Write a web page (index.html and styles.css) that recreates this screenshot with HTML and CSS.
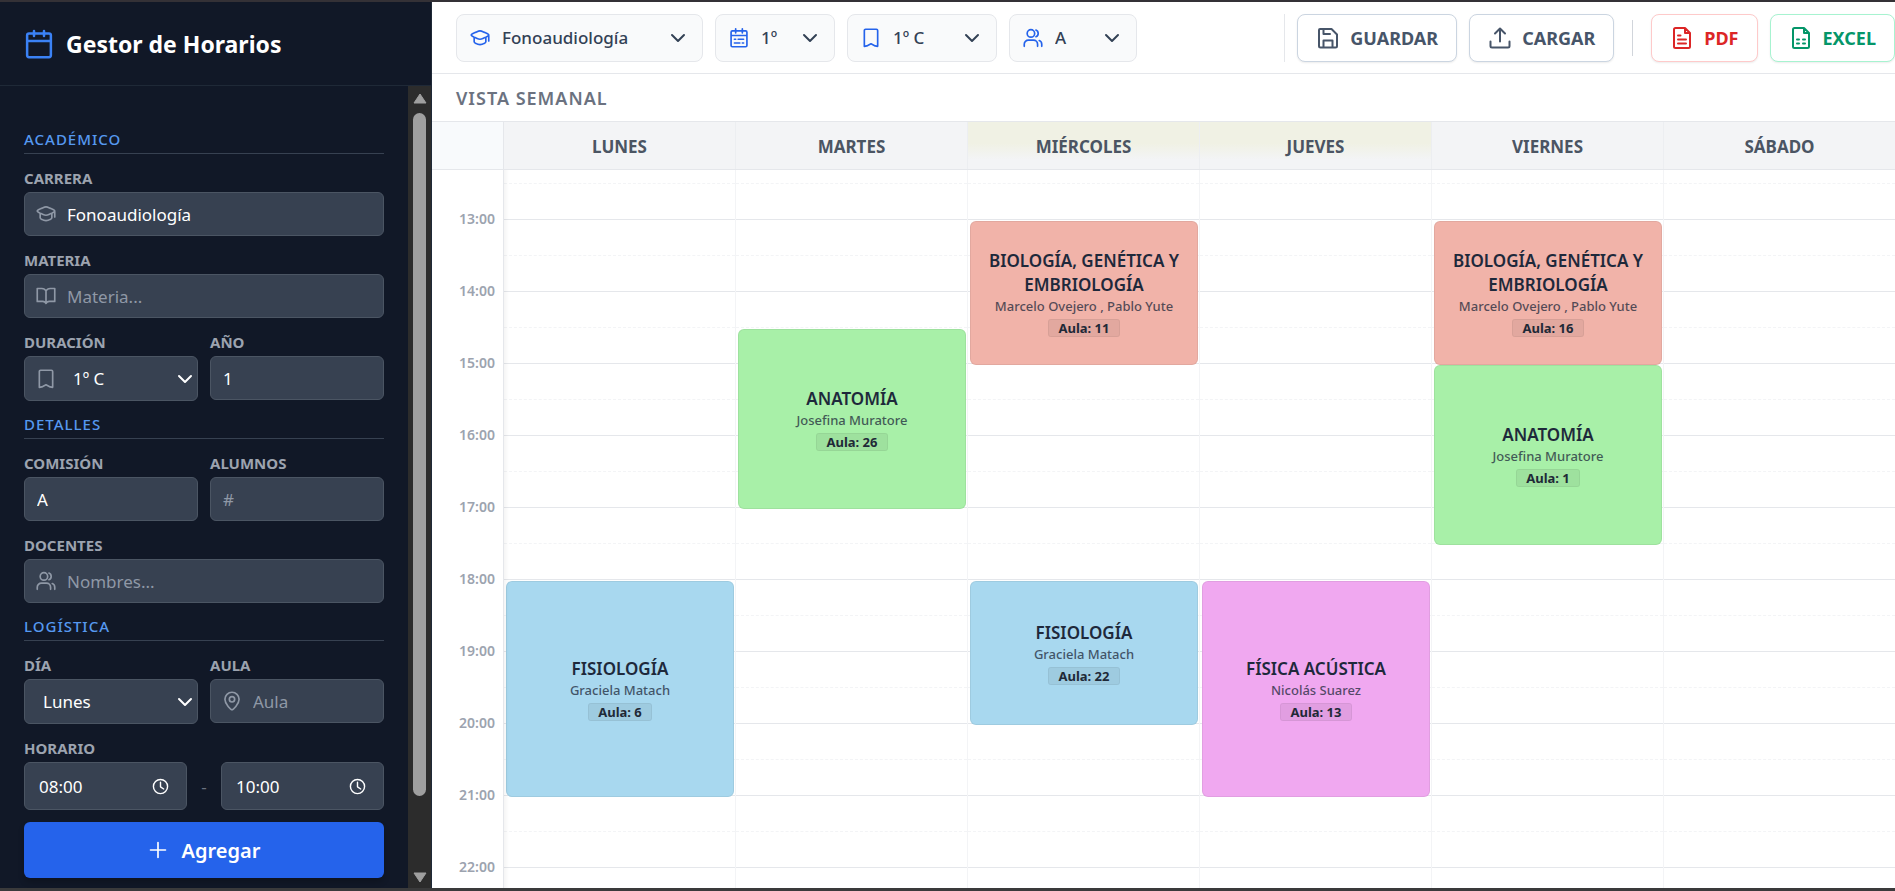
FILE: index.html
```html
<!DOCTYPE html>
<html lang="es">
<head>
    <meta charset="UTF-8">
    <meta name="viewport" content="width=device-width, initial-scale=1.0">
    <title>Gestor de Horarios</title>
    <link rel="stylesheet" href="styles.css">
</head>
<body>
    <svg class="sprite" aria-hidden="true">
        <symbol id="i-calendar" viewBox="0 0 24 24"><path d="M4 3.500h16a1.500 1.500 0 0 1 1.500 1.500v16a1.500 1.500 0 0 1-1.500 1.500H4A1.500 1.500 0 0 1 2.500 21V5A1.500 1.500 0 0 1 4 3.500zM2.500 9.500h19M8 1.500v4M16 1.500v4"/></symbol>
        <symbol id="i-calendar-days" viewBox="0 0 24 24"><path d="M4 3.500h16A1.500 1.500 0 0 1 21.500 5v16a1.500 1.500 0 0 1-1.500 1.500H4A1.500 1.500 0 0 1 2.500 21V5A1.500 1.500 0 0 1 4 3.500zM2.500 9h19M8 1v5M16 1v5M6.500 13.500H8M11 13.500h6.500M6.500 18H13M16 18h1.500"/></symbol>
        <symbol id="i-cap" viewBox="0 0 24 24"><path d="M12 3.500c2 0 3.500 1 6 2s4.500 1.700 4.500 3-2 2-4.500 3-4 2-6 2-3.500-1-6-2-4.500-1.700-4.500-3 2-2 4.500-3 4-2 6-2zM5 11.500v5c0 1 1 1.500 2 2 1.500 1 3 1.500 5 1.500s3.500-.5 5-1.500c1-.5 2-1 2-2v-5M22.500 9v6.500"/></symbol>
        <symbol id="i-book" viewBox="0 0 24 24"><path d="M12 6v15M12 6c-1-2-3-3-5-3H1.500v15.500H8c2 0 3.500 1 4 2.500.5-1.500 2-2.500 4-2.500h6.500V3H17c-2 0-4 1-5 3z"/></symbol>
        <symbol id="i-bookmark" viewBox="0 0 24 24"><path d="M5.500 1.500h13A1.500 1.500 0 0 1 20 3v19l-3-.5-5-2.500-5 2.500-3 .5V3a1.500 1.500 0 0 1 1.500-1.500z"/></symbol>
        <symbol id="i-users" viewBox="0 0 24 24"><circle cx="9.500" cy="6.500" r="4.500"/><path d="M1.500 22v-2.500a5 5 0 0 1 5-5h6a5 5 0 0 1 5 5V22M15.500 2.500a4.300 4.300 0 0 1 0 8M19.500 15c2 .7 3 2.300 3 4.500V22"/></symbol>
        <symbol id="i-pin" viewBox="0 0 24 24"><path d="M12 22.500c-1 0-8.500-6.500-8.500-12.500a8.500 8.500 0 0 1 17 0c0 6-7.500 12.500-8.500 12.500z"/><circle cx="12" cy="10" r="3.200"/></symbol>
        <symbol id="i-save" viewBox="0 0 24 24"><path d="M4 3h11.500L21 8.500V20a1.500 1.500 0 0 1-1.500 1.500h-15A1.500 1.500 0 0 1 3 20V4a1 1 0 0 1 1-1zM7.500 3v5H14M7.500 21.500V14.500h9v7"/></symbol>
        <symbol id="i-upload" viewBox="0 0 24 24"><path d="M2.500 15.500v4.500A1.500 1.500 0 0 0 4 21.500h16a1.500 1.500 0 0 0 1.500-1.500v-4.500M12 15.500V3M7 7.500L12 2.500l5 5"/></symbol>
        <symbol id="i-pdf" viewBox="0 0 24 24"><path d="M15 2H5.500A1.500 1.500 0 0 0 4 3.500v17A1.500 1.500 0 0 0 5.500 22h13a1.500 1.500 0 0 0 1.500-1.500V7zM15 2v5h5M8 9.500h2.500M8 13.500h8M8 17.500h8"/></symbol>
        <symbol id="i-excel" viewBox="0 0 24 24"><path d="M15 2H5.500A1.500 1.500 0 0 0 4 3.500v17A1.500 1.500 0 0 0 5.500 22h13a1.500 1.500 0 0 0 1.500-1.500V7zM15 2v5h5M8 13.500h2M14 13.500h2M8 17.500h2M14 17.500h2"/></symbol>
        <symbol id="i-clock" viewBox="0 0 24 24"><circle cx="12" cy="12" r="10"/><path d="M12 6v6.500l4.500 3"/></symbol>
        <symbol id="i-plus" viewBox="0 0 24 24"><path d="M12 3v18M3 12h18"/></symbol>
        <symbol id="i-chevron" viewBox="0 0 16 16"><path d="M2 5l6 6 6-6"/></symbol>
    </svg>

    <aside class="sidebar">
        <div class="sidebar-header">
            <svg class="icon logo"><use href="#i-calendar"/></svg>
            <h1>Gestor de Horarios</h1>
        </div>
        <div class="sidebar-body">
            <form class="form" onsubmit="return false">
                <h2 class="section-title">ACADÉMICO</h2>
                <div class="field">
                    <label for="carrera">CARRERA</label>
                    <div class="control with-icon">
                        <svg class="icon"><use href="#i-cap"/></svg>
                        <input type="text" id="carrera" value="Fonoaudiología">
                    </div>
                </div>
                <div class="field">
                    <label for="materia">MATERIA</label>
                    <div class="control with-icon">
                        <svg class="icon"><use href="#i-book"/></svg>
                        <input type="text" id="materia" placeholder="Materia...">
                    </div>
                </div>
                <div class="row">
                    <div class="field">
                        <label for="duracion">DURACIÓN</label>
                        <div class="control with-icon">
                            <svg class="icon"><use href="#i-bookmark"/></svg>
                            <select id="duracion"><option>1º C</option><option>2º C</option></select>
                            <svg class="chevron"><use href="#i-chevron"/></svg>
                        </div>
                    </div>
                    <div class="field">
                        <label for="anio">AÑO</label>
                        <div class="control"><input type="text" id="anio" value="1"></div>
                    </div>
                </div>

                <h2 class="section-title">DETALLES</h2>
                <div class="row">
                    <div class="field">
                        <label for="comision">COMISIÓN</label>
                        <div class="control"><input type="text" id="comision" value="A"></div>
                    </div>
                    <div class="field">
                        <label for="alumnos">ALUMNOS</label>
                        <div class="control"><input type="text" id="alumnos" placeholder="#"></div>
                    </div>
                </div>
                <div class="field">
                    <label for="docentes">DOCENTES</label>
                    <div class="control with-icon">
                        <svg class="icon"><use href="#i-users"/></svg>
                        <input type="text" id="docentes" placeholder="Nombres...">
                    </div>
                </div>

                <h2 class="section-title">LOGÍSTICA</h2>
                <div class="row">
                    <div class="field">
                        <label for="dia">DÍA</label>
                        <div class="control">
                            <select id="dia"><option>Lunes</option><option>Martes</option></select>
                            <svg class="chevron"><use href="#i-chevron"/></svg>
                        </div>
                    </div>
                    <div class="field">
                        <label for="aula">AULA</label>
                        <div class="control with-icon">
                            <svg class="icon"><use href="#i-pin"/></svg>
                            <input type="text" id="aula" placeholder="Aula">
                        </div>
                    </div>
                </div>
                <div class="field">
                    <label for="inicio">HORARIO</label>
                    <div class="time-row">
                        <div class="control time">
                            <input type="text" id="inicio" value="08:00">
                            <svg class="clock"><use href="#i-clock"/></svg>
                        </div>
                        <span class="dash">-</span>
                        <div class="control time">
                            <input type="text" id="fin" value="10:00" aria-label="Fin">
                            <svg class="clock"><use href="#i-clock"/></svg>
                        </div>
                    </div>
                </div>
                <button type="submit" class="btn-add"><svg class="icon"><use href="#i-plus"/></svg>Agregar</button>
            </form>
            <div class="scrollbar" aria-hidden="true">
                <svg class="arrow" viewBox="0 0 14 11"><path d="M7 1L13 10H1z"/></svg>
                <div class="track"><div class="thumb"></div></div>
                <svg class="arrow" viewBox="0 0 14 11"><path d="M7 10L1 1h12z"/></svg>
            </div>
        </div>
    </aside>

    <main class="main">
        <div class="toolbar">
            <div class="filters">
                <label class="filter filter-carrera">
                    <svg class="icon"><use href="#i-cap"/></svg>
                    <select aria-label="Carrera"><option>Fonoaudiología</option></select>
                    <svg class="chevron"><use href="#i-chevron"/></svg>
                </label>
                <label class="filter filter-anio">
                    <svg class="icon"><use href="#i-calendar-days"/></svg>
                    <select aria-label="Año"><option>1º</option></select>
                    <svg class="chevron"><use href="#i-chevron"/></svg>
                </label>
                <label class="filter filter-duracion">
                    <svg class="icon"><use href="#i-bookmark"/></svg>
                    <select aria-label="Duración"><option>1º C</option></select>
                    <svg class="chevron"><use href="#i-chevron"/></svg>
                </label>
                <label class="filter filter-comision">
                    <svg class="icon"><use href="#i-users"/></svg>
                    <select aria-label="Comisión"><option>A</option></select>
                    <svg class="chevron"><use href="#i-chevron"/></svg>
                </label>
            </div>
            <div class="actions">
                <button class="btn"><svg class="icon"><use href="#i-save"/></svg>GUARDAR</button>
                <button class="btn"><svg class="icon"><use href="#i-upload"/></svg>CARGAR</button>
                <span class="divider"></span>
                <button class="btn btn-pdf"><svg class="icon"><use href="#i-pdf"/></svg>PDF</button>
                <button class="btn btn-excel"><svg class="icon"><use href="#i-excel"/></svg>EXCEL</button>
            </div>
        </div>
        <h2 class="view-title">VISTA SEMANAL</h2>
        <div class="days-header">
            <div class="corner"></div>
            <div class="day-name">LUNES</div>
            <div class="day-name">MARTES</div>
            <div class="day-name glow">MIÉRCOLES</div>
            <div class="day-name glow">JUEVES</div>
            <div class="day-name">VIERNES</div>
            <div class="day-name">SÁBADO</div>
        </div>
        <div class="schedule" id="schedule">
            <div class="hours" id="hours"></div>
        </div>
    </main>

    <script src="script.js"></script>
</body>
</html>
```

FILE: styles.css
```css
* {
    box-sizing: border-box;
}
body {
    margin: 0;
    height: 100vh;
    display: flex;
    font-family: "Noto Sans", "Open Sans", sans-serif;
    font-size: 17px;
    background-color: white;
    border-top: 2px solid #343136;
    border-bottom: 3px solid #3a3a3b;
    overflow: hidden;
}
h1, h2 {
    margin: 0;
}
input, select, button {
    font-family: inherit;
    font-size: 17px;
}
select {
    appearance: none;
}
.sprite {
    position: absolute;
    width: 0;
    height: 0;
}
.icon, .chevron, .clock {
    fill: none;
    stroke: currentColor;
    stroke-linecap: round;
    stroke-linejoin: round;
    flex: none;
}
.icon {
    width: 20px;
    height: 20px;
    stroke-width: 2;
}
.chevron {
    width: 16px;
    height: 16px;
    stroke-width: 2;
}

/* Sidebar */
.sidebar {
    width: 432px;
    flex: none;
    display: flex;
    flex-direction: column;
    background-color: #111827;
    border-right: 1px solid #1f2937;
    color: white;
}
.sidebar-header {
    display: flex;
    align-items: center;
    gap: 12px;
    height: 84px;
    flex: none;
    padding: 0 24px;
    border-bottom: 1px solid #1f2937;
}
.sidebar-header h1 {
    font-size: 23px;
    line-height: 32px;
    font-weight: 700;
}
.logo {
    width: 30px;
    height: 30px;
    color: #3b82f6;
}
.sidebar-body {
    display: flex;
    flex: 1;
    min-height: 0;
}
.form {
    flex: 1;
    min-width: 0;
    display: flex;
    flex-direction: column;
    gap: 12px;
    padding: 42px 24px 10px;
}
.section-title {
    font-size: 15px;
    line-height: 23px;
    font-weight: 500;
    letter-spacing: 1px;
    color: #5699f0;
    padding-bottom: 2px;
    border-bottom: 1px solid #374151;
}
.row {
    display: grid;
    grid-template-columns: 1fr 1fr;
    align-items: start;
    gap: 12px;
}
.field {
    display: flex;
    flex-direction: column;
    gap: 2px;
}
.field label {
    font-size: 15px;
    line-height: 24px;
    font-weight: 700;
    color: #9ca3af;
}
.control {
    display: flex;
    align-items: center;
    position: relative;
}
.control input, .control select {
    width: 100%;
    height: 44px;
    padding: 0 12px;
    background-color: #374151;
    border: 1px solid #4b5563;
    border-radius: 6px;
    color: white;
}
.control select {
    height: 45px;
    padding-left: 18px;
}
.control input::placeholder {
    color: #8f98a6;
    opacity: 1;
}
.control.with-icon input {
    padding-left: 42px;
}
.control.with-icon select {
    padding-left: 48px;
}
.control .icon {
    position: absolute;
    left: 12px;
    color: #8f98a6;
}
.control .chevron {
    position: absolute;
    right: 5px;
    pointer-events: none;
}
.time-row {
    display: grid;
    grid-template-columns: 1fr 10px 1fr;
    align-items: center;
    gap: 12px;
}
.control.time input {
    height: 48px;
    padding-left: 14px;
}
.time .clock {
    position: absolute;
    right: 18px;
    width: 17px;
    height: 17px;
    stroke-width: 2;
}
.dash {
    color: #6b7280;
    text-align: center;
}
.btn-add {
    display: flex;
    align-items: center;
    justify-content: center;
    gap: 14px;
    height: 56px;
    flex: none;
    border: none;
    border-radius: 6px;
    background-color: #2563eb;
    color: white;
    font-size: 20px;
    font-weight: 600;
    cursor: pointer;
    box-shadow: 0 4px 6px rgba(0, 0, 0, 0.2);
}
.scrollbar {
    width: 23px;
    flex: none;
    display: flex;
    flex-direction: column;
    align-items: center;
    gap: 9px;
    padding: 7px 0 5px;
    background-color: #2c2c2c;
}
.arrow {
    width: 14px;
    height: 11px;
    flex: none;
    fill: #9f9f9f;
    stroke: #9f9f9f;
    stroke-width: 1;
    stroke-linejoin: round;
}
.track {
    flex: 1;
    width: 13px;
}
.thumb {
    height: 91%;
    border-radius: 7px;
    background-color: #9f9f9f;
}

/* Toolbar */
.main {
    flex: 1;
    min-width: 0;
    display: flex;
    flex-direction: column;
}
.toolbar {
    display: flex;
    justify-content: space-between;
    align-items: center;
    height: 72px;
    flex: none;
    padding-left: 24px;
    border-bottom: 1px solid #e5e7eb;
}
.filters, .actions {
    display: flex;
    align-items: center;
    gap: 12px;
}
.filter {
    display: flex;
    align-items: center;
    position: relative;
    height: 48px;
    background-color: #f9fafb;
    border: 1px solid #e5e7eb;
    border-radius: 8px;
    color: #334155;
}
.filter .icon {
    position: absolute;
    left: 13px;
    color: #2563eb;
}
.filter .chevron {
    position: absolute;
    right: 16px;
    pointer-events: none;
}
.filter select {
    width: 100%;
    height: 46px;
    padding: 0 40px 0 45px;
    border: none;
    background: none;
    color: inherit;
    font-weight: 500;
}
.filter-carrera {
    width: 247px;
}
.filter-anio {
    width: 120px;
}
.filter-duracion {
    width: 150px;
}
.filter-comision {
    width: 128px;
}
.actions {
    padding-left: 12px;
    border-left: 1px solid #e5e7eb;
}
.btn {
    display: flex;
    align-items: center;
    gap: 10px;
    height: 48px;
    padding: 0 18px;
    background-color: white;
    border: 1px solid #cbd5e1;
    border-radius: 8px;
    color: #475569;
    font-size: 18px;
    font-weight: 700;
    cursor: pointer;
    box-shadow: 0 1px 2px rgba(0, 0, 0, 0.08);
}
.btn .icon {
    width: 24px;
    height: 24px;
}
.btn-pdf {
    border-color: #fecaca;
    color: #dc2626;
}
.btn-excel {
    border-color: #a7f3d0;
    color: #059669;
}
.divider {
    width: 1px;
    height: 36px;
    margin: 0 6px;
    background-color: #d1d5db;
}
.view-title {
    flex: none;
    padding: 2px 24px 0;
    font-size: 18px;
    line-height: 45px;
    font-weight: 600;
    letter-spacing: 1px;
    color: #6b7280;
    border-bottom: 1px solid #e5e7eb;
}

/* Timetable */
.days-header {
    display: flex;
    flex: none;
    height: 48px;
    border-bottom: 1px solid #e5e7eb;
    background-color: #f3f4f6;
}
.corner, .hours {
    width: 72px;
    flex: none;
    border-right: 1px solid #e5e7eb;
}
.corner {
    background-color: #f8fafc;
}
.day-name {
    flex: 1;
    line-height: 49px;
    text-align: center;
    font-size: 17px;
    font-weight: 700;
    color: #4b5563;
    border-right: 1px solid #eceef1;
}
.day-name.glow {
    background-image: linear-gradient(#f0f1e4 45%, #f3f4f6 80%);
}
.schedule {
    display: flex;
    flex: 1;
    min-height: 0;
    overflow: hidden;
}
.hours {
    position: relative;
    z-index: 1;
    height: max-content;
    padding-top: 35px;
    background-color: white;
    box-shadow: 2px 0 4px rgba(0, 0, 0, 0.05);
}
.hour {
    height: 72px;
    line-height: 72px;
    padding-right: 8px;
    text-align: right;
    font-size: 14px;
    font-weight: 600;
    color: #9ca3af;
}
.day {
    flex: 1;
    min-width: 0;
    height: max-content;
    position: relative;
    border-right: 1px solid #f3f4f6;
}
.day:last-child, .day-name:last-child {
    border-right: none;
}
.slot {
    height: 36px;
    border-bottom: 1px dashed #f3f4f6;
}
.slot:nth-child(even) {
    border-bottom: 1px solid #e5e7eb;
}
.event {
    position: absolute;
    left: 2px;
    right: 1px;
    display: flex;
    flex-direction: column;
    align-items: center;
    justify-content: center;
    padding: 0 12px;
    text-align: center;
    border: 1px solid rgba(0, 0, 0, 0.06);
    border-radius: 6px;
}
.event-title {
    font-size: 17px;
    line-height: 24px;
    font-weight: 600;
    color: #1e293b;
}
.event-teacher {
    font-size: 13px;
    line-height: 18px;
    font-weight: 500;
    color: #1e293b;
    opacity: 0.75;
}
.event-room {
    margin-top: 4px;
    padding: 0 9px;
    font-size: 13px;
    line-height: 16px;
    font-weight: 700;
    color: #1f2937;
    background-color: rgba(0, 0, 0, 0.06);
    border: 1px solid rgba(0, 0, 0, 0.05);
    border-radius: 3px;
}
.red {
    background-color: #f1b3a9;
}
.green {
    background-color: #a8f0a8;
}
.blue {
    background-color: #a8d8ef;
}
.pink {
    background-color: #f0a8f0;
}
```

FILE: script.js
```javascript
const START = 12;
const END = 23;
const HOUR_HEIGHT = 72;

const events = [
    { day: 0, from: 18, to: 21, color: "blue", title: "FISIOLOGÍA", teacher: "Graciela Matach", room: 6 },
    { day: 1, from: 14.5, to: 17, color: "green", title: "ANATOMÍA", teacher: "Josefina Muratore", room: 26 },
    { day: 2, from: 13, to: 15, color: "red", title: "BIOLOGÍA, GENÉTICA Y EMBRIOLOGÍA", teacher: "Marcelo Ovejero , Pablo Yute", room: 11 },
    { day: 2, from: 18, to: 20, color: "blue", title: "FISIOLOGÍA", teacher: "Graciela Matach", room: 22 },
    { day: 3, from: 18, to: 21, color: "pink", title: "FÍSICA ACÚSTICA", teacher: "Nicolás Suarez", room: 13 },
    { day: 4, from: 13, to: 15, color: "red", title: "BIOLOGÍA, GENÉTICA Y EMBRIOLOGÍA", teacher: "Marcelo Ovejero , Pablo Yute", room: 16 },
    { day: 4, from: 15, to: 17.5, color: "green", title: "ANATOMÍA", teacher: "Josefina Muratore", room: 1 }
];

const schedule = document.getElementById("schedule");
const hours = document.getElementById("hours");

for (let h = START + 1; h < END; h++) {
    hours.innerHTML += `<div class="hour">${h}:00</div>`;
}

for (let d = 0; d < 6; d++) {
    const day = document.createElement("div");
    day.className = "day";
    day.innerHTML = '<div class="slot"></div>'.repeat((END - START) * 2);
    events.filter(e => e.day === d).forEach(e => {
        const top = (e.from - START) * HOUR_HEIGHT + 1;
        const height = (e.to - e.from) * HOUR_HEIGHT;
        day.innerHTML += `<div class="event ${e.color}" style="top:${top}px;height:${height}px">
            <div class="event-title">${e.title}</div>
            <div class="event-teacher">${e.teacher}</div>
            <div class="event-room">Aula: ${e.room}</div>
        </div>`;
    });
    schedule.appendChild(day);
}

// arranca poco después del mediodía
schedule.scrollTop = 22;
```
